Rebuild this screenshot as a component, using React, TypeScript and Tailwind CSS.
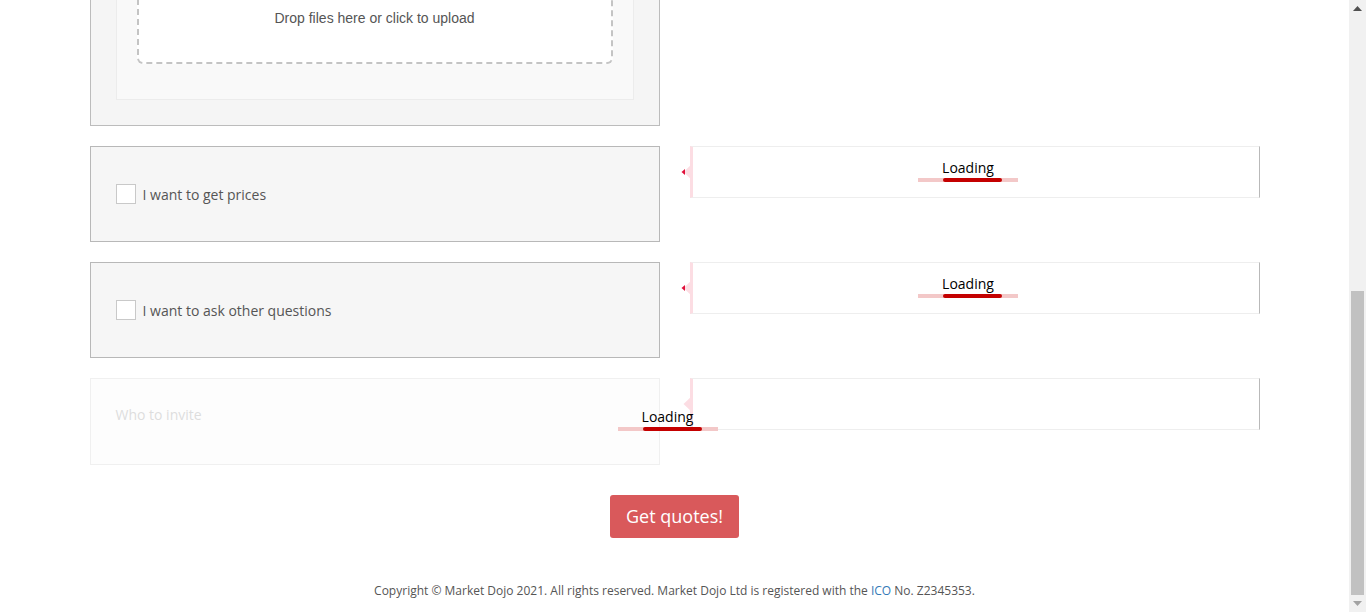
import React from 'react';

const openSans = { fontFamily: '"Open Sans", "Liberation Sans", sans-serif' };

function LoadingBar() {
  return (
    <div className="flex flex-col items-center">
      <span className="text-[14px] leading-[20px] text-black">Loading</span>
      <div className="relative w-[100px] h-[4px] bg-[#f3c8c8]">
        <div className="absolute left-[25px] top-0 h-[4px] w-[59px] rounded-full bg-[#c40000]" />
      </div>
    </div>
  );
}

function Arrow({ dot }: { dot: boolean }) {
  return (
    <svg className="absolute -left-[12px] top-1/2 -translate-y-1/2" width="12" height="18" viewBox="0 0 12 18">
      <polygon points="12,0 12,18 2.5,9" fill="#fcdde3" />
      {dot && <polygon points="4,6 4,12 0.5,9" fill="#e0103a" />}
    </svg>
  );
}

function SidePanel({ loading, dot }: { loading: boolean; dot: boolean }) {
  return (
    <div className="relative h-[52px] self-start border-l-[3px] border-l-[#fcdde3] border-y border-y-[#eeeeee] border-r border-r-[#b9b9b9] bg-white flex items-center justify-center">
      <Arrow dot={dot} />
      {loading && (
        <div className="-mt-[5px] mr-[15px]">
          <LoadingBar />
        </div>
      )}
    </div>
  );
}

function CheckCard({ label }: { label: string }) {
  return (
    <div className="h-[96px] border border-[#b8b8b8] bg-[#f6f6f6] px-[25px] flex items-center">
      <span className="w-[20px] h-[20px] border border-[#c9c9c9] bg-white mr-[7px]" />
      <span className="text-[14px] text-[#555555]">{label}</span>
    </div>
  );
}

export default function App() {
  return (
    <div className="h-[612px] w-full flex overflow-hidden bg-white" style={openSans}>
      <main className="flex-1 h-full overflow-hidden flex flex-col justify-end">
        <div className="w-[1170px] mx-auto flex flex-col gap-[20px]">
          {/* Upload section */}
          <div className="grid grid-cols-2 gap-[30px]">
            <div className="border border-[#bcbcbc] bg-[#f5f5f5] px-[25px] pt-[25px] pb-[25px]">
              <div className="border border-[#ececec] bg-[#f9f9f9] px-[20px] pt-[20px] pb-[35px]">
                <div
                  className="h-[88px] rounded-[6px] border-2 border-dashed border-[#c4c4c4] bg-white flex items-center justify-center pb-[4px]"
                  style={{ fontFamily: '"Liberation Sans", Arial, sans-serif' }}
                >
                  <span className="text-[14px] text-[#555555]">Drop files here or click to upload</span>
                </div>
              </div>
            </div>
            <div />
          </div>

          <div className="grid grid-cols-2 gap-[30px]">
            <CheckCard label="I want to get prices" />
            <SidePanel loading dot />
          </div>

          <div className="grid grid-cols-2 gap-[30px]">
            <CheckCard label="I want to ask other questions" />
            <SidePanel loading dot />
          </div>

          <div className="relative grid grid-cols-2 gap-[30px]">
            <div className="h-[87px] border border-[#f0f0f0] bg-[#fdfdfd] px-[25px] pt-[23px]">
              <span className="text-[14px] leading-[20px] text-[#dddddd]">Who to invite</span>
            </div>
            <SidePanel loading={false} dot={false} />
            <div className="absolute left-[528px] top-[29px]">
              <LoadingBar />
            </div>
          </div>
        </div>

        <div className="flex justify-center mt-[30px]">
          <button className="h-[43px] px-[16px] rounded-[3px] bg-[#d9595b] text-white text-[18px]">Get quotes!</button>
        </div>

        <footer className="mt-[44px] pb-[13px] text-center text-[12px] leading-[17px] text-[#555555]">
          Copyright © Market Dojo 2021. All rights reserved. Market Dojo Ltd is registered with the{' '}
          <span className="text-[#337ab7]">ICO</span> No. Z2345353.
        </footer>
      </main>

      {/* scrollbar */}
      <div className="w-[17px] h-full bg-[#f1f1f1] flex flex-col items-center">
        <div className="h-[17px] flex items-center justify-center">
          <svg width="9" height="5" viewBox="0 0 9 5">
            <polygon points="0,5 9,5 4.5,0" fill="#505050" />
          </svg>
        </div>
        <div className="flex-1 w-full px-[2px] flex flex-col justify-end">
          <div className="h-[304px] w-full bg-[#c1c1c1]" />
        </div>
        <div className="h-[17px] flex items-center justify-center">
          <svg width="9" height="5" viewBox="0 0 9 5">
            <polygon points="0,0 9,0 4.5,5" fill="#a3a3a3" />
          </svg>
        </div>
      </div>
    </div>
  );
}
